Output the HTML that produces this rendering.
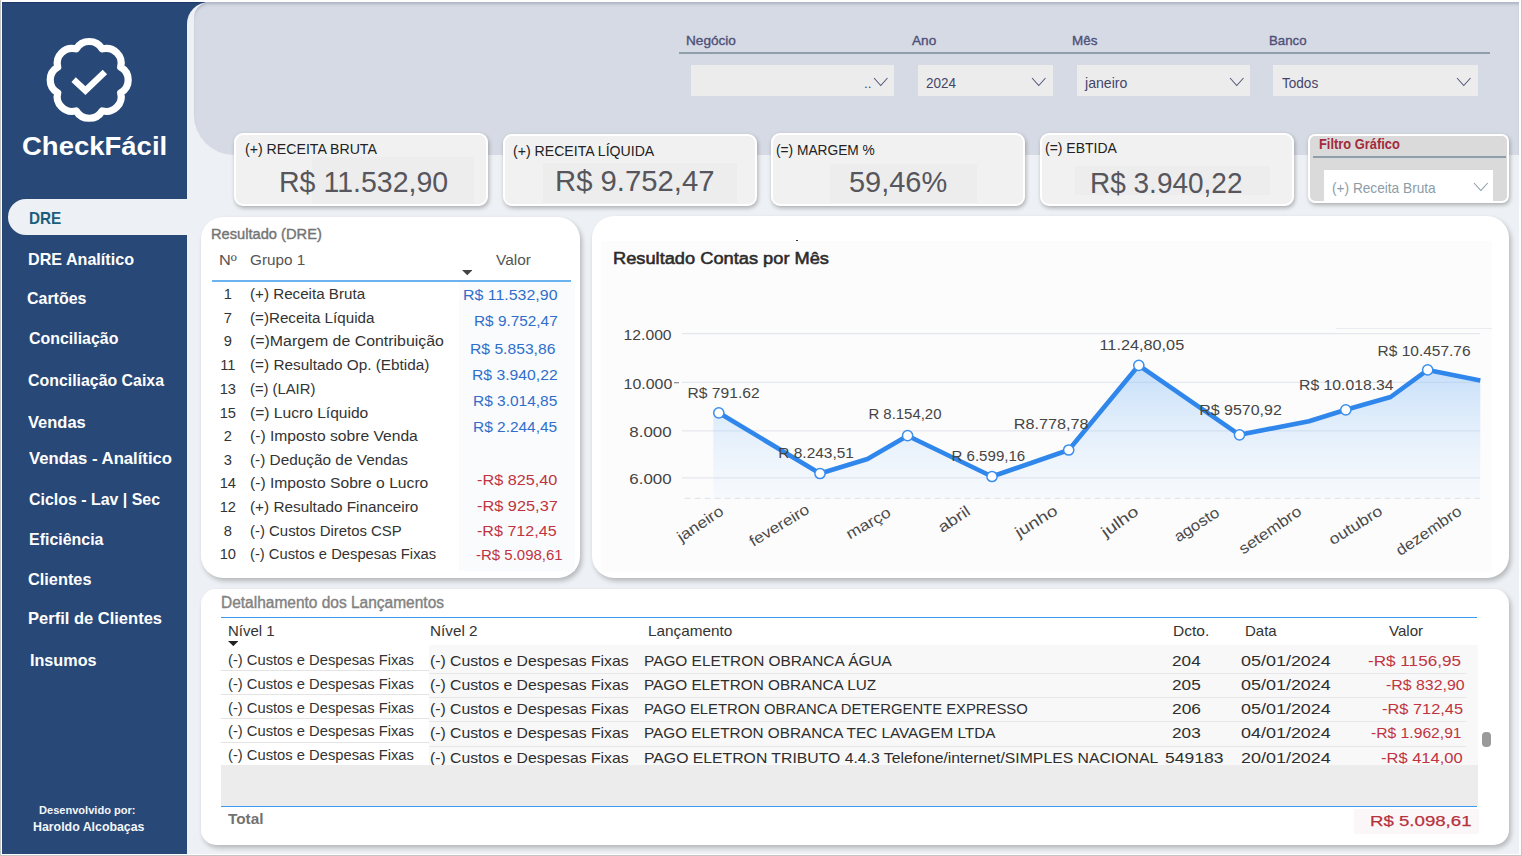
<!DOCTYPE html>
<html lang="pt-BR">
<head>
<meta charset="utf-8">
<title>CheckFácil - DRE</title>
<style>
*{box-sizing:border-box;margin:0;padding:0}
html,body{width:1522px;height:856px;overflow:hidden;background:#eceef0;font-family:"Liberation Sans",sans-serif}
.abs{position:absolute}
#frame{position:absolute;left:0;top:0;width:1522px;height:856px;background:#fdfdfd;overflow:hidden}
#side{position:absolute;left:2px;top:2px;width:230px;height:851.7px;background:#284877;box-shadow:inset 0 1.5px 1px -.5px #1d3966}
#main{position:absolute;left:187px;top:2px;width:1332.2px;height:851.7px;background:#edf0f4;border-top-left-radius:22px}
#top{position:absolute;left:194px;top:2px;width:1325.2px;height:153px;background:#d6dae4;border-radius:16px 0 0 40px;box-shadow:inset 0 3px 3px -1px rgba(110,120,145,.4)}
#tab{position:absolute;left:8.4px;top:199px;width:182px;height:35.5px;background:#edf0f4;border-radius:18px 0 0 18px}
.card{position:absolute;background:#f1f1f1;border:2px solid #fff;border-radius:9px;box-shadow:1px 2px 4px rgba(0,0,0,.28)}
.panel{position:absolute;background:#fff;border-radius:22px;box-shadow:2px 3px 5px rgba(0,0,0,.24)}
.t{position:absolute;white-space:pre}
#bd{position:absolute;left:0;top:0;width:1522px;height:856px;border:1px solid #c5c5c5;border-top:0;pointer-events:none}
</style>
</head>
<body>
<div id="frame">
<div id="side"></div>
<div id="main"></div>
<div id="top"></div>
<svg class="abs" style="left:0;top:0" width="188" height="200" viewBox="0 0 188 200"><path d="M76.18 48.46A15 15 0 0 1 102.22 48.46A15 15 0 0 1 120.64 66.88A15 15 0 0 1 120.64 92.92A15 15 0 0 1 102.22 111.34A15 15 0 0 1 76.18 111.34A15 15 0 0 1 57.76 92.92A15 15 0 0 1 57.76 66.88A15 15 0 0 1 76.18 48.46Z" fill="none" stroke="#fff" stroke-width="7.2" stroke-linejoin="round" transform="translate(0 79.9) scale(1 .985) translate(0 -79.9)"/><path d="M73.6 79.6L85.4 90.5L104.9 72" fill="none" stroke="#fff" stroke-width="6.4"/></svg>
<div class="t" style="top:129.12px;font-size:26.5px;line-height:34px;color:#fff;font-weight:bold;left:22.30px;transform:scaleX(1.0376);transform-origin:0 0;">CheckFácil</div>
<div id="tab"></div>
<div class="t" style="top:207.79px;font-size:16.2px;line-height:21px;color:#1b5e7c;font-weight:bold;left:29.20px;transform:scaleX(0.9448);transform-origin:0 0;">DRE</div>
<div class="t" style="top:248.89px;font-size:16.2px;line-height:21px;color:#fff;font-weight:bold;left:28.00px;transform:scaleX(0.9959);transform-origin:0 0;">DRE Analítico</div>
<div class="t" style="top:287.89px;font-size:16.2px;line-height:21px;color:#fff;font-weight:bold;left:26.80px;transform:scaleX(0.9854);transform-origin:0 0;">Cartões</div>
<div class="t" style="top:327.89px;font-size:16.2px;line-height:21px;color:#fff;font-weight:bold;left:29.20px;transform:scaleX(0.9839);transform-origin:0 0;">Conciliação</div>
<div class="t" style="top:369.89px;font-size:16.2px;line-height:21px;color:#fff;font-weight:bold;left:28.00px;transform:scaleX(0.9815);transform-origin:0 0;">Conciliação Caixa</div>
<div class="t" style="top:411.59px;font-size:16.2px;line-height:21px;color:#fff;font-weight:bold;left:27.70px;transform:scaleX(1.0196);transform-origin:0 0;">Vendas</div>
<div class="t" style="top:447.89px;font-size:16.2px;line-height:21px;color:#fff;font-weight:bold;left:28.50px;transform:scaleX(1.0301);transform-origin:0 0;">Vendas - Analítico</div>
<div class="t" style="top:488.89px;font-size:16.2px;line-height:21px;color:#fff;font-weight:bold;left:29.00px;transform:scaleX(0.9836);transform-origin:0 0;">Ciclos - Lav | Sec</div>
<div class="t" style="top:528.89px;font-size:16.2px;line-height:21px;color:#fff;font-weight:bold;left:29.00px;transform:scaleX(0.9855);transform-origin:0 0;">Eficiência</div>
<div class="t" style="top:568.89px;font-size:16.2px;line-height:21px;color:#fff;font-weight:bold;left:28.00px;transform:scaleX(1.0082);transform-origin:0 0;">Clientes</div>
<div class="t" style="top:607.89px;font-size:16.2px;line-height:21px;color:#fff;font-weight:bold;left:28.00px;transform:scaleX(1.0202);transform-origin:0 0;">Perfil de Clientes</div>
<div class="t" style="top:649.89px;font-size:16.2px;line-height:21px;color:#fff;font-weight:bold;left:30.00px;transform:scaleX(0.9991);transform-origin:0 0;">Insumos</div>
<div class="t" style="top:802.38px;font-size:11.6px;line-height:15px;color:#f4f6fa;font-weight:bold;left:38.50px;transform:scaleX(0.9541);transform-origin:0 0;">Desenvolvido por:</div>
<div class="t" style="top:817.60px;font-size:13px;line-height:17px;color:#f4f6fa;font-weight:bold;left:32.50px;transform:scaleX(0.9507);transform-origin:0 0;">Haroldo Alcobaças</div>
<div class="abs" style="left:679.00px;top:52.20px;width:811.00px;height:1.90px;background:#8e9fab;"></div>
<div class="t" style="top:32.32px;font-size:13.5px;line-height:18px;color:#4f4f78;left:685.80px;transform:scaleX(1.0074);transform-origin:0 0;-webkit-text-stroke:.35px #4f4f78;">Negócio</div>
<div class="t" style="top:32.32px;font-size:13.5px;line-height:18px;color:#4f4f78;left:912.30px;transform:scaleX(1.0070);transform-origin:0 0;-webkit-text-stroke:.35px #4f4f78;">Ano</div>
<div class="t" style="top:32.32px;font-size:13.5px;line-height:18px;color:#4f4f78;left:1071.60px;transform:scaleX(0.9955);transform-origin:0 0;-webkit-text-stroke:.35px #4f4f78;">Mês</div>
<div class="t" style="top:32.32px;font-size:13.5px;line-height:18px;color:#4f4f78;left:1268.70px;transform:scaleX(0.9822);transform-origin:0 0;-webkit-text-stroke:.35px #4f4f78;">Banco</div>
<div class="abs" style="left:691.00px;top:65.30px;width:203.00px;height:31.10px;background:#ececec;"></div>
<svg class="abs" style="left:872.7px;top:77.3px" width="15.5" height="9.5" viewBox="-1 -1 15.5 9.5"><path d="M0 0L6.75 7.5L13.5 0" fill="none" stroke="#55557a" stroke-width="1.05"/></svg>
<div class="abs" style="left:917.60px;top:65.30px;width:135.60px;height:31.10px;background:#ececec;"></div>
<div class="t" style="top:73.74px;font-size:14.6px;line-height:19px;color:#45456a;left:925.70px;transform:scaleX(0.9240);transform-origin:0 0;">2024</div>
<svg class="abs" style="left:1031.3px;top:77.3px" width="15.5" height="9.5" viewBox="-1 -1 15.5 9.5"><path d="M0 0L6.75 7.5L13.5 0" fill="none" stroke="#55557a" stroke-width="1.05"/></svg>
<div class="abs" style="left:1076.80px;top:65.30px;width:173.40px;height:31.10px;background:#ececec;"></div>
<div class="t" style="top:73.74px;font-size:14.6px;line-height:19px;color:#45456a;left:1084.60px;transform:scaleX(0.9678);transform-origin:0 0;">janeiro</div>
<svg class="abs" style="left:1229px;top:77.3px" width="15.5" height="9.5" viewBox="-1 -1 15.5 9.5"><path d="M0 0L6.75 7.5L13.5 0" fill="none" stroke="#55557a" stroke-width="1.05"/></svg>
<div class="abs" style="left:1273.00px;top:65.30px;width:205.00px;height:31.10px;background:#ececec;"></div>
<div class="t" style="top:73.74px;font-size:14.6px;line-height:19px;color:#45456a;left:1281.70px;transform:scaleX(0.9293);transform-origin:0 0;">Todos</div>
<svg class="abs" style="left:1455.5px;top:77.3px" width="15.5" height="9.5" viewBox="-1 -1 15.5 9.5"><path d="M0 0L6.75 7.5L13.5 0" fill="none" stroke="#55557a" stroke-width="1.05"/></svg>
<div class="t" style="top:74.70px;font-size:13px;line-height:17px;color:#45456a;left:864.00px;transform:scaleX(1.0367);transform-origin:0 0;">..</div>
<div class="card" style="left:234.2px;top:132.8px;width:254.3px;height:73.2px"></div>
<div class="abs" style="left:312.00px;top:157.00px;width:161.70px;height:47.00px;background:#ededee;"></div>
<div class="t" style="top:140.31px;font-size:14.4px;line-height:19px;color:#222;left:244.90px;transform:scaleX(0.9828);transform-origin:0 0;">(+) RECEITA BRUTA</div>
<div class="t" style="top:162.95px;font-size:29.3px;line-height:38px;color:#56565c;left:279.30px;transform:scaleX(0.9738);transform-origin:0 0;">R$ 11.532,90</div>
<div class="card" style="left:502.7px;top:133.8px;width:254.3px;height:72.2px"></div>
<div class="abs" style="left:543.00px;top:162.70px;width:194.00px;height:40.30px;background:#ededee;"></div>
<div class="t" style="top:142.11px;font-size:14.4px;line-height:19px;color:#222;left:513.40px;transform:scaleX(0.9807);transform-origin:0 0;">(+) RECEITA LÍQUIDA</div>
<div class="t" style="top:161.07px;font-size:29.8px;line-height:39px;color:#56565c;left:555.30px;transform:scaleX(0.9824);transform-origin:0 0;">R$ 9.752,47</div>
<div class="card" style="left:771px;top:132.8px;width:254.0px;height:73.2px"></div>
<div class="abs" style="left:830.00px;top:164.00px;width:147.00px;height:39.00px;background:#ededee;"></div>
<div class="t" style="top:141.21px;font-size:14.4px;line-height:19px;color:#222;left:776.20px;transform:scaleX(0.9542);transform-origin:0 0;">(=) MARGEM %</div>
<div class="t" style="top:161.77px;font-size:29.8px;line-height:39px;color:#56565c;left:848.90px;transform:scaleX(0.9717);transform-origin:0 0;">59,46%</div>
<div class="card" style="left:1039.6px;top:132.8px;width:254.4px;height:73.2px"></div>
<div class="abs" style="left:1075.00px;top:165.80px;width:194.70px;height:29.20px;background:#ededee;"></div>
<div class="t" style="top:139.41px;font-size:14.4px;line-height:19px;color:#222;left:1045.00px;transform:scaleX(0.9707);transform-origin:0 0;">(=) EBTIDA</div>
<div class="t" style="top:164.18px;font-size:29.5px;line-height:38px;color:#56565c;left:1090.00px;transform:scaleX(0.9487);transform-origin:0 0;">R$ 3.940,22</div>
<div class="card" style="left:1307.7px;top:134px;width:201px;height:68.5px;background:#dadada;border-radius:7px"></div>
<div class="t" style="top:134.98px;font-size:14.2px;line-height:18px;color:#a32b3b;font-weight:bold;left:1319.20px;transform:scaleX(0.9082);transform-origin:0 0;">Filtro Gráfico</div>
<div class="abs" style="left:1313.00px;top:156.40px;width:193.00px;height:1.20px;background:#8e9fab;"></div>
<div class="abs" style="left:1324.40px;top:169.70px;width:168.60px;height:30.90px;background:#fff;"></div>
<div class="t" style="top:178.68px;font-size:14.5px;line-height:19px;color:#8c9da7;left:1332.30px;transform:scaleX(0.9426);transform-origin:0 0;">(+) Receita Bruta</div>
<svg class="abs" style="left:1473px;top:181.6px" width="15.7" height="9.5" viewBox="-1 -1 15.7 9.5"><path d="M0 0L6.85 7.5L13.7 0" fill="none" stroke="#8c9da7" stroke-width="1.1"/></svg>
<div class="panel" style="left:200.8px;top:217.2px;width:379.2px;height:360.4px"></div>
<div class="abs" style="left:458.60px;top:282.00px;width:116.20px;height:288.50px;background:#fafbfd;"></div>
<div class="t" style="top:224.20px;font-size:15.3px;line-height:20px;color:#747474;left:211.20px;transform:scaleX(0.9583);transform-origin:0 0;-webkit-text-stroke:.4px #747474;">Resultado (DRE)</div>
<div class="t" style="top:251.11px;font-size:14.7px;line-height:19px;color:#555;left:219.20px;transform:scaleX(1.1136);transform-origin:0 0;">Nº</div>
<div class="t" style="top:251.11px;font-size:14.7px;line-height:19px;color:#555;left:250.20px;transform:scaleX(1.0400);transform-origin:0 0;">Grupo 1</div>
<div class="t" style="top:251.11px;font-size:14.7px;line-height:19px;color:#555;left:496.00px;transform:scaleX(1.0511);transform-origin:0 0;">Valor</div>
<svg class="abs" style="left:461.8px;top:270.4px" width="10.5" height="5.300000000000011" viewBox="0 0 10.5 5.300000000000011"><path d="M0 0H10.5L5.25 5.300000000000011Z" fill="#444"/></svg>
<div class="abs" style="left:212.00px;top:279.70px;width:358.80px;height:2.10px;background:#6ab3ef;"></div>
<div class="t" style="top:284.61px;font-size:14.7px;line-height:19px;color:#333;left:223.71px;">1</div>
<div class="t" style="top:284.61px;font-size:14.7px;line-height:19px;color:#333;left:250.20px;transform:scaleX(1.0329);transform-origin:0 0;">(+) Receita Bruta</div>
<div class="t" style="top:308.71px;font-size:14.7px;line-height:19px;color:#333;left:223.71px;">7</div>
<div class="t" style="top:308.71px;font-size:14.7px;line-height:19px;color:#333;left:250.20px;transform:scaleX(1.0329);transform-origin:0 0;">(=)Receita Líquida</div>
<div class="t" style="top:332.11px;font-size:14.7px;line-height:19px;color:#333;left:223.71px;">9</div>
<div class="t" style="top:332.11px;font-size:14.7px;line-height:19px;color:#333;left:250.20px;transform:scaleX(1.0821);transform-origin:0 0;">(=)Margem de Contribuição</div>
<div class="t" style="top:355.71px;font-size:14.7px;line-height:19px;color:#333;left:220.18px;">11</div>
<div class="t" style="top:355.71px;font-size:14.7px;line-height:19px;color:#333;left:250.20px;transform:scaleX(1.0440);transform-origin:0 0;">(=) Resultado Op. (Ebtida)</div>
<div class="t" style="top:379.51px;font-size:14.7px;line-height:19px;color:#333;left:219.63px;">13</div>
<div class="t" style="top:379.51px;font-size:14.7px;line-height:19px;color:#333;left:250.20px;transform:scaleX(1.0066);transform-origin:0 0;">(=) (LAIR)</div>
<div class="t" style="top:403.51px;font-size:14.7px;line-height:19px;color:#333;left:219.63px;">15</div>
<div class="t" style="top:403.51px;font-size:14.7px;line-height:19px;color:#333;left:250.20px;transform:scaleX(1.0614);transform-origin:0 0;">(=) Lucro Líquido</div>
<div class="t" style="top:426.81px;font-size:14.7px;line-height:19px;color:#333;left:223.71px;">2</div>
<div class="t" style="top:426.81px;font-size:14.7px;line-height:19px;color:#333;left:250.20px;transform:scaleX(1.0650);transform-origin:0 0;">(-) Imposto sobre Venda</div>
<div class="t" style="top:450.61px;font-size:14.7px;line-height:19px;color:#333;left:223.71px;">3</div>
<div class="t" style="top:450.61px;font-size:14.7px;line-height:19px;color:#333;left:250.20px;transform:scaleX(1.0459);transform-origin:0 0;">(-) Dedução de Vendas</div>
<div class="t" style="top:474.21px;font-size:14.7px;line-height:19px;color:#333;left:219.63px;">14</div>
<div class="t" style="top:474.21px;font-size:14.7px;line-height:19px;color:#333;left:250.20px;transform:scaleX(1.0655);transform-origin:0 0;">(-) Imposto Sobre o Lucro</div>
<div class="t" style="top:497.81px;font-size:14.7px;line-height:19px;color:#333;left:219.63px;">12</div>
<div class="t" style="top:497.81px;font-size:14.7px;line-height:19px;color:#333;left:250.20px;transform:scaleX(1.0438);transform-origin:0 0;">(+) Resultado Financeiro</div>
<div class="t" style="top:521.71px;font-size:14.7px;line-height:19px;color:#333;left:223.71px;">8</div>
<div class="t" style="top:521.71px;font-size:14.7px;line-height:19px;color:#333;left:250.20px;transform:scaleX(1.0163);transform-origin:0 0;">(-) Custos Diretos CSP</div>
<div class="t" style="top:544.81px;font-size:14.7px;line-height:19px;color:#333;left:219.63px;">10</div>
<div class="t" style="top:544.81px;font-size:14.7px;line-height:19px;color:#333;left:250.20px;transform:scaleX(1.0044);transform-origin:0 0;">(-) Custos e Despesas Fixas</div>
<div class="t" style="top:286.21px;font-size:14.7px;line-height:19px;color:#2f6fcb;left:463.00px;transform:scaleX(1.0848);transform-origin:0 0;">R$ 11.532,90</div>
<div class="t" style="top:312.41px;font-size:14.7px;line-height:19px;color:#2f6fcb;left:473.60px;transform:scaleX(1.0458);transform-origin:0 0;">R$ 9.752,47</div>
<div class="t" style="top:339.51px;font-size:14.7px;line-height:19px;color:#2f6fcb;left:469.60px;transform:scaleX(1.0671);transform-origin:0 0;">R$ 5.853,86</div>
<div class="t" style="top:365.91px;font-size:14.7px;line-height:19px;color:#2f6fcb;left:471.50px;transform:scaleX(1.0708);transform-origin:0 0;">R$ 3.940,22</div>
<div class="t" style="top:391.81px;font-size:14.7px;line-height:19px;color:#2f6fcb;left:473.00px;transform:scaleX(1.0533);transform-origin:0 0;">R$ 3.014,85</div>
<div class="t" style="top:418.01px;font-size:14.7px;line-height:19px;color:#2f6fcb;left:473.00px;transform:scaleX(1.0521);transform-origin:0 0;">R$ 2.244,45</div>
<div class="t" style="top:470.91px;font-size:14.7px;line-height:19px;color:#c0343f;left:476.90px;transform:scaleX(1.1050);transform-origin:0 0;">-R$ 825,40</div>
<div class="t" style="top:497.01px;font-size:14.7px;line-height:19px;color:#c0343f;left:477.00px;transform:scaleX(1.1118);transform-origin:0 0;">-R$ 925,37</div>
<div class="t" style="top:521.61px;font-size:14.7px;line-height:19px;color:#c0343f;left:477.00px;transform:scaleX(1.0953);transform-origin:0 0;">-R$ 712,45</div>
<div class="t" style="top:545.71px;font-size:14.7px;line-height:19px;color:#c0343f;left:475.60px;transform:scaleX(1.0209);transform-origin:0 0;">-R$ 5.098,61</div>
<div class="panel" style="left:591.7px;top:215.6px;width:916.9px;height:362px"></div>
<div class="abs" style="left:600.60px;top:240.70px;width:891.80px;height:331.30px;background:#fcfcfd;"></div>
<div class="abs" style="left:795.50px;top:240.00px;width:2.50px;height:1.30px;background:#333;"></div>
<div class="t" style="top:248.08px;font-size:16.8px;line-height:22px;color:#2b2b2b;left:613.30px;transform:scaleX(1.0871);transform-origin:0 0;-webkit-text-stroke:.55px #2b2b2b;">Resultado Contas por Mês</div>
<svg class="abs" style="left:600px;top:300px" width="900" height="272" viewBox="0 0 900 272" font-family="Liberation Sans, sans-serif">
<defs><linearGradient id="ag" x1="0" y1="0" x2="0" y2="1"><stop offset="0" stop-color="#8cc0f5" stop-opacity=".5"/><stop offset="1" stop-color="#cfe4fa" stop-opacity=".12"/></linearGradient></defs>
<line x1="82" x2="880" y1="33.6" y2="33.6" stroke="#e4e7ee" stroke-width="1.2"/>
<line x1="82" x2="880" y1="82.4" y2="82.4" stroke="#e4e7ee" stroke-width="1.2"/>
<line x1="82" x2="880" y1="130.8" y2="130.8" stroke="#e4e7ee" stroke-width="1.2"/>
<line x1="82" x2="880" y1="177.8" y2="177.8" stroke="#e4e7ee" stroke-width="1.2"/>
<line x1="84.60000000000002" x2="880" y1="198.3" y2="198.3" stroke="#e3e6ea" stroke-width="1.2" stroke-dasharray="6 4"/>
<line x1="736" x2="892" y1="28.5" y2="28.5" stroke="#ececf0" stroke-width="1"/>
<path d="M113.3 198.3L113.3 109.5L118.8 112.8L220.0 173.5L267.5 159.0L307.6 135.7L392.0 176.5L468.7 150.0L538.8 65.3L639.5 134.8L709.0 121.2L745.8 109.8L790.6 97.0L827.7 69.9L880.3 80.4L880.3 198.3Z" fill="url(#ag)"/>
<path d="M118.8 112.8L220.0 173.5L267.5 159.0L307.6 135.7L392.0 176.5L468.7 150.0L538.8 65.3L639.5 134.8L709.0 121.2L745.8 109.8L790.6 97.0L827.7 69.9L880.3 80.4" fill="none" stroke="#2f86eb" stroke-width="4.6" stroke-linejoin="round" stroke-linecap="butt"/>
<circle cx="118.8" cy="112.8" r="5.1" fill="#fff" stroke="#3a8eee" stroke-width="1.5"/>
<circle cx="220.0" cy="173.5" r="5.1" fill="#fff" stroke="#3a8eee" stroke-width="1.5"/>
<circle cx="307.6" cy="135.7" r="5.1" fill="#fff" stroke="#3a8eee" stroke-width="1.5"/>
<circle cx="392.0" cy="176.5" r="5.1" fill="#fff" stroke="#3a8eee" stroke-width="1.5"/>
<circle cx="468.7" cy="150.0" r="5.1" fill="#fff" stroke="#3a8eee" stroke-width="1.5"/>
<circle cx="538.8" cy="65.3" r="5.1" fill="#fff" stroke="#3a8eee" stroke-width="1.5"/>
<circle cx="639.5" cy="134.8" r="5.1" fill="#fff" stroke="#3a8eee" stroke-width="1.5"/>
<circle cx="745.8" cy="109.8" r="5.1" fill="#fff" stroke="#3a8eee" stroke-width="1.5"/>
<circle cx="827.7" cy="69.9" r="5.1" fill="#fff" stroke="#3a8eee" stroke-width="1.5"/>
<text x="23.6" y="40.4" font-size="14.3" fill="#444" textLength="48.0" lengthAdjust="spacingAndGlyphs">12.000</text>
<text x="23.6" y="88.9" font-size="14.3" fill="#444" textLength="48.7" lengthAdjust="spacingAndGlyphs">10.000</text>
<text x="29.3" y="137.0" font-size="14.3" fill="#444" textLength="42.3" lengthAdjust="spacingAndGlyphs">8.000</text>
<text x="29.3" y="184.3" font-size="14.3" fill="#444" textLength="42.3" lengthAdjust="spacingAndGlyphs">6.000</text>
<line x1="74" x2="79" y1="82.69999999999999" y2="82.69999999999999" stroke="#888" stroke-width="1.2"/>
<text x="87.6" y="98.0" font-size="14" fill="#454545" textLength="72.0" lengthAdjust="spacingAndGlyphs">R$ 791.62</text>
<text x="178.3" y="157.5" font-size="14" fill="#454545" textLength="75.6" lengthAdjust="spacingAndGlyphs">R 8.243,51</text>
<text x="268.4" y="119.1" font-size="14" fill="#454545" textLength="73.1" lengthAdjust="spacingAndGlyphs">R 8.154,20</text>
<text x="351.5" y="160.5" font-size="14" fill="#454545" textLength="73.7" lengthAdjust="spacingAndGlyphs">R 6.599,16</text>
<text x="413.8" y="128.8" font-size="14" fill="#454545" textLength="74.8" lengthAdjust="spacingAndGlyphs">R8.778,78</text>
<text x="499.5" y="50.2" font-size="14" fill="#454545" textLength="84.7" lengthAdjust="spacingAndGlyphs">11.24,80,05</text>
<text x="599.3" y="115.2" font-size="14" fill="#454545" textLength="82.5" lengthAdjust="spacingAndGlyphs">R$ 9570,92</text>
<text x="699.0" y="90.1" font-size="14" fill="#454545" textLength="94.6" lengthAdjust="spacingAndGlyphs">R$ 10.018.34</text>
<text x="777.6" y="55.7" font-size="14" fill="#454545" textLength="93.0" lengthAdjust="spacingAndGlyphs">R$ 10.457.76</text>
<text transform="translate(79.2 239.1) rotate(-33.6)" x="0" y="4" font-size="15.3" fill="#4a4a4a" textLength="51.9" lengthAdjust="spacingAndGlyphs">janeiro</text>
<text transform="translate(151.1 243.6) rotate(-31.2)" x="0" y="4" font-size="15.3" fill="#4a4a4a" textLength="67.1" lengthAdjust="spacingAndGlyphs">fevereiro</text>
<text transform="translate(247.8 236.1) rotate(-29.7)" x="0" y="4" font-size="15.3" fill="#4a4a4a" textLength="48.6" lengthAdjust="spacingAndGlyphs">março</text>
<text transform="translate(340.0 230.0) rotate(-33.8)" x="0" y="4" font-size="15.3" fill="#4a4a4a" textLength="35.3" lengthAdjust="spacingAndGlyphs">abril</text>
<text transform="translate(416.8 234.6) rotate(-31.7)" x="0" y="4" font-size="15.3" fill="#4a4a4a" textLength="46.8" lengthAdjust="spacingAndGlyphs">junho</text>
<text transform="translate(503.5 234.6) rotate(-35.6)" x="0" y="4" font-size="15.3" fill="#4a4a4a" textLength="41.6" lengthAdjust="spacingAndGlyphs">julho</text>
<text transform="translate(576.0 239.1) rotate(-32.7)" x="0" y="4" font-size="15.3" fill="#4a4a4a" textLength="50.3" lengthAdjust="spacingAndGlyphs">agosto</text>
<text transform="translate(641.0 251.5) rotate(-34.6)" x="0" y="4" font-size="15.3" fill="#4a4a4a" textLength="72.3" lengthAdjust="spacingAndGlyphs">setembro</text>
<text transform="translate(730.7 242.1) rotate(-32.0)" x="0" y="4" font-size="15.3" fill="#4a4a4a" textLength="59.9" lengthAdjust="spacingAndGlyphs">outubro</text>
<text transform="translate(798.1 253.0) rotate(-34.2)" x="0" y="4" font-size="15.3" fill="#4a4a4a" textLength="75.7" lengthAdjust="spacingAndGlyphs">dezembro</text>
</svg>
<div class="panel" style="left:201px;top:588.7px;width:1307.6px;height:255.9px;border-radius:15px"></div>
<div class="t" style="top:591.53px;font-size:15.8px;line-height:21px;color:#828282;left:221.30px;transform:scaleX(0.9804);transform-origin:0 0;-webkit-text-stroke:.4px #828282;">Detalhamento dos Lançamentos</div>
<div class="abs" style="left:221.30px;top:616.80px;width:1255.70px;height:1.10px;background:#3a9bf0;"></div>
<div class="abs" style="left:428.60px;top:644.50px;width:1049.90px;height:120.30px;background:#f8f8f9;"></div>
<div class="t" style="top:620.60px;font-size:15px;line-height:20px;color:#333;left:227.60px;transform:scaleX(0.9981);transform-origin:0 0;">Nível 1</div>
<div class="t" style="top:620.60px;font-size:15px;line-height:20px;color:#333;left:430.10px;transform:scaleX(1.0174);transform-origin:0 0;">Nível 2</div>
<div class="t" style="top:620.60px;font-size:15px;line-height:20px;color:#333;left:648.10px;transform:scaleX(1.0210);transform-origin:0 0;">Lançamento</div>
<div class="t" style="top:620.60px;font-size:15px;line-height:20px;color:#333;left:1172.70px;transform:scaleX(1.0367);transform-origin:0 0;">Dcto.</div>
<div class="t" style="top:620.60px;font-size:15px;line-height:20px;color:#333;left:1245.30px;transform:scaleX(1.0004);transform-origin:0 0;">Data</div>
<div class="t" style="top:620.60px;font-size:15px;line-height:20px;color:#333;left:1388.50px;transform:scaleX(1.0057);transform-origin:0 0;">Valor</div>
<svg class="abs" style="left:227.6px;top:640.9px" width="10.599999999999994" height="5.100000000000023" viewBox="0 0 10.599999999999994 5.100000000000023"><path d="M0 0H10.599999999999994L5.299999999999997 5.100000000000023Z" fill="#222"/></svg>
<div class="abs" style="left:221.30px;top:670.00px;width:207.30px;height:1.10px;background:#e4e4e4;"></div>
<div class="abs" style="left:221.30px;top:693.90px;width:207.30px;height:1.10px;background:#e4e4e4;"></div>
<div class="abs" style="left:221.30px;top:717.80px;width:207.30px;height:1.10px;background:#e4e4e4;"></div>
<div class="abs" style="left:221.30px;top:741.60px;width:207.30px;height:1.10px;background:#e4e4e4;"></div>
<div class="abs" style="left:428.60px;top:672.80px;width:1037.40px;height:1.10px;background:#e6e6ea;"></div>
<div class="abs" style="left:428.60px;top:697.10px;width:1037.40px;height:1.10px;background:#e6e6ea;"></div>
<div class="abs" style="left:428.60px;top:721.20px;width:1037.40px;height:1.10px;background:#e6e6ea;"></div>
<div class="abs" style="left:428.60px;top:745.70px;width:1037.40px;height:1.10px;background:#e6e6ea;"></div>
<div class="t" style="top:651.41px;font-size:14.7px;line-height:19px;color:#333;left:227.60px;transform:scaleX(1.0033);transform-origin:0 0;">(-) Custos e Despesas Fixas</div>
<div class="t" style="top:652.14px;font-size:14.6px;line-height:19px;color:#2e2e2e;left:430.10px;transform:scaleX(1.0787);transform-origin:0 0;">(-) Custos e Despesas Fixas</div>
<div class="t" style="top:652.14px;font-size:14.6px;line-height:19px;color:#2e2e2e;left:644.20px;transform:scaleX(1.0549);transform-origin:0 0;">PAGO ELETRON OBRANCA ÁGUA</div>
<div class="t" style="top:652.14px;font-size:14.6px;line-height:19px;color:#2e2e2e;left:1171.80px;transform:scaleX(1.1782);transform-origin:0 0;">204</div>
<div class="t" style="top:652.14px;font-size:14.6px;line-height:19px;color:#2e2e2e;left:1241.30px;transform:scaleX(1.2293);transform-origin:0 0;">05/01/2024</div>
<div class="t" style="top:652.14px;font-size:14.6px;line-height:19px;color:#c0343f;left:1368.30px;transform:scaleX(1.1735);transform-origin:0 0;">-R$ 1156,95</div>
<div class="t" style="top:675.31px;font-size:14.7px;line-height:19px;color:#333;left:227.60px;transform:scaleX(1.0033);transform-origin:0 0;">(-) Custos e Despesas Fixas</div>
<div class="t" style="top:676.24px;font-size:14.6px;line-height:19px;color:#2e2e2e;left:430.10px;transform:scaleX(1.0787);transform-origin:0 0;">(-) Custos e Despesas Fixas</div>
<div class="t" style="top:676.24px;font-size:14.6px;line-height:19px;color:#2e2e2e;left:644.20px;transform:scaleX(1.0496);transform-origin:0 0;">PAGO ELETRON OBRANCA LUZ</div>
<div class="t" style="top:676.24px;font-size:14.6px;line-height:19px;color:#2e2e2e;left:1171.80px;transform:scaleX(1.1782);transform-origin:0 0;">205</div>
<div class="t" style="top:676.24px;font-size:14.6px;line-height:19px;color:#2e2e2e;left:1241.30px;transform:scaleX(1.2293);transform-origin:0 0;">05/01/2024</div>
<div class="t" style="top:676.24px;font-size:14.6px;line-height:19px;color:#c0343f;left:1386.40px;transform:scaleX(1.0884);transform-origin:0 0;">-R$ 832,90</div>
<div class="t" style="top:698.51px;font-size:14.7px;line-height:19px;color:#333;left:227.60px;transform:scaleX(1.0033);transform-origin:0 0;">(-) Custos e Despesas Fixas</div>
<div class="t" style="top:700.34px;font-size:14.6px;line-height:19px;color:#2e2e2e;left:430.10px;transform:scaleX(1.0787);transform-origin:0 0;">(-) Custos e Despesas Fixas</div>
<div class="t" style="top:700.34px;font-size:14.6px;line-height:19px;color:#2e2e2e;left:644.20px;transform:scaleX(1.0163);transform-origin:0 0;">PAGO ELETRON OBRANCA DETERGENTE EXPRESSO</div>
<div class="t" style="top:700.34px;font-size:14.6px;line-height:19px;color:#2e2e2e;left:1171.80px;transform:scaleX(1.1905);transform-origin:0 0;">206</div>
<div class="t" style="top:700.34px;font-size:14.6px;line-height:19px;color:#2e2e2e;left:1241.30px;transform:scaleX(1.2293);transform-origin:0 0;">05/01/2024</div>
<div class="t" style="top:700.34px;font-size:14.6px;line-height:19px;color:#c0343f;left:1381.80px;transform:scaleX(1.1216);transform-origin:0 0;">-R$ 712,45</div>
<div class="t" style="top:722.41px;font-size:14.7px;line-height:19px;color:#333;left:227.60px;transform:scaleX(1.0033);transform-origin:0 0;">(-) Custos e Despesas Fixas</div>
<div class="t" style="top:724.14px;font-size:14.6px;line-height:19px;color:#2e2e2e;left:430.10px;transform:scaleX(1.0787);transform-origin:0 0;">(-) Custos e Despesas Fixas</div>
<div class="t" style="top:724.14px;font-size:14.6px;line-height:19px;color:#2e2e2e;left:644.20px;transform:scaleX(1.0483);transform-origin:0 0;">PAGO ELETRON OBRANCA TEC LAVAGEM LTDA</div>
<div class="t" style="top:724.14px;font-size:14.6px;line-height:19px;color:#2e2e2e;left:1171.80px;transform:scaleX(1.1782);transform-origin:0 0;">203</div>
<div class="t" style="top:724.14px;font-size:14.6px;line-height:19px;color:#2e2e2e;left:1241.30px;transform:scaleX(1.2293);transform-origin:0 0;">04/01/2024</div>
<div class="t" style="top:724.14px;font-size:14.6px;line-height:19px;color:#c0343f;left:1371.30px;transform:scaleX(1.0736);transform-origin:0 0;">-R$ 1.962,91</div>
<div class="t" style="top:746.31px;font-size:14.7px;line-height:19px;color:#333;left:227.60px;transform:scaleX(1.0033);transform-origin:0 0;">(-) Custos e Despesas Fixas</div>
<div class="t" style="top:748.64px;font-size:14.6px;line-height:19px;color:#2e2e2e;left:430.10px;transform:scaleX(1.0787);transform-origin:0 0;">(-) Custos e Despesas Fixas</div>
<div class="t" style="top:748.64px;font-size:14.6px;line-height:19px;color:#2e2e2e;left:644.20px;transform:scaleX(1.0806);transform-origin:0 0;">PAGO ELETRON TRIBUTO 4.4.3 Telefone/internet/SIMPLES NACIONAL</div>
<div class="t" style="top:748.64px;font-size:14.6px;line-height:19px;color:#2e2e2e;left:1165.20px;transform:scaleX(1.2032);transform-origin:0 0;">549183</div>
<div class="t" style="top:748.64px;font-size:14.6px;line-height:19px;color:#2e2e2e;left:1241.30px;transform:scaleX(1.2293);transform-origin:0 0;">20/01/2024</div>
<div class="t" style="top:748.64px;font-size:14.6px;line-height:19px;color:#c0343f;left:1381.20px;transform:scaleX(1.1299);transform-origin:0 0;">-R$ 414,00</div>
<div class="abs" style="left:221.30px;top:764.80px;width:1257.20px;height:41.20px;background:#ececec;"></div>
<div class="abs" style="left:221.30px;top:806.00px;width:1255.70px;height:1.20px;background:#3a9bf0;"></div>
<div class="abs" style="left:1354.00px;top:808.50px;width:124.50px;height:25.70px;background:#fbf7f8;"></div>
<div class="t" style="top:810.27px;font-size:14.8px;line-height:19px;color:#727272;font-weight:bold;left:228.30px;transform:scaleX(1.0365);transform-origin:0 0;">Total</div>
<div class="t" style="top:810.73px;font-size:15.2px;line-height:20px;color:#b7313d;left:1370.40px;transform:scaleX(1.2264);transform-origin:0 0;-webkit-text-stroke:.25px #b7313d;">R$ 5.098,61</div>
<div class="abs" style="left:1482.20px;top:732.00px;width:8.40px;height:14.60px;background:#9a9a9a;border-radius:4px;"></div>
<div id="bd"></div>
</div>
</body>
</html>
